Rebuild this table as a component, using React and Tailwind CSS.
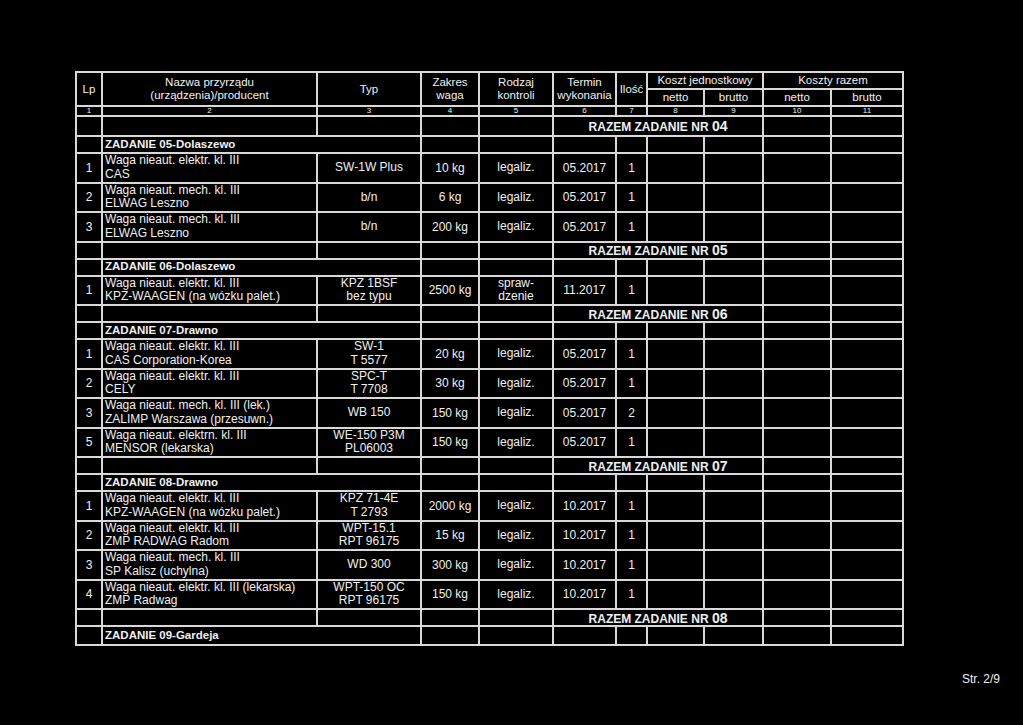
import React from "react";

const sections = [
  {
    razem: "04",
    title: "ZADANIE 05-Dolaszewo",
    rows: [
      ["1", ["Waga nieaut. elektr. kl. III", "CAS"], ["SW-1W Plus"], "10 kg", ["legaliz."], "05.2017", "1"],
      ["2", ["Waga nieaut. mech. kl. III", "ELWAG Leszno"], ["b/n"], "6 kg", ["legaliz."], "05.2017", "1"],
      ["3", ["Waga nieaut. mech. kl. III", "ELWAG Leszno"], ["b/n"], "200 kg", ["legaliz."], "05.2017", "1"],
    ],
  },
  {
    razem: "05",
    title: "ZADANIE 06-Dolaszewo",
    rows: [
      ["1", ["Waga nieaut. elektr. kl. III", "KPZ-WAAGEN (na wózku palet.)"], ["KPZ 1BSF", "bez typu"], "2500 kg", ["spraw-", "dzenie"], "11.2017", "1"],
    ],
  },
  {
    razem: "06",
    title: "ZADANIE 07-Drawno",
    rows: [
      ["1", ["Waga nieaut. elektr. kl. III", "CAS Corporation-Korea"], ["SW-1", "T 5577"], "20 kg", ["legaliz."], "05.2017", "1"],
      ["2", ["Waga nieaut. elektr. kl. III", "CELY"], ["SPC-T", "T 7708"], "30 kg", ["legaliz."], "05.2017", "1"],
      ["3", ["Waga nieaut. mech. kl. III (lek.)", "ZALIMP Warszawa (przesuwn.)"], ["WB 150"], "150 kg", ["legaliz."], "05.2017", "2"],
      ["5", ["Waga nieaut. elektrn. kl. III", "MENSOR (lekarska)"], ["WE-150 P3M", "PL06003"], "150 kg", ["legaliz."], "05.2017", "1"],
    ],
  },
  {
    razem: "07",
    title: "ZADANIE 08-Drawno",
    rows: [
      ["1", ["Waga nieaut. elektr. kl. III", "KPZ-WAAGEN (na wózku palet.)"], ["KPZ 71-4E", "T 2793"], "2000 kg", ["legaliz."], "10.2017", "1"],
      ["2", ["Waga nieaut. elektr. kl. III", "ZMP RADWAG Radom"], ["WPT-15.1", "RPT 96175"], "15 kg", ["legaliz."], "10.2017", "1"],
      ["3", ["Waga nieaut. mech. kl. III", "SP Kalisz (uchylna)"], ["WD 300"], "300 kg", ["legaliz."], "10.2017", "1"],
      ["4", ["Waga nieaut. elektr. kl. III (lekarska)", "ZMP Radwag"], ["WPT-150 OC", "RPT 96175"], "150 kg", ["legaliz."], "10.2017", "1"],
    ],
  },
  {
    razem: "08",
    title: "ZADANIE 09-Gardeja",
    rows: [],
  },
];

const cell = "border-2 border-[#d8d8d8] p-0";
const cols = [26, 215, 104, 58, 74, 63, 31, 57, 59, 68, 72];

function Lines({ items }) {
  return items.map((t, i) => (
    <div key={i} className="leading-[13.5px]">
      {t}
    </div>
  ));
}

function RazemRow({ nr, first }) {
  return (
    <tr className={first ? "h-[20px]" : "h-[17px]"}>
      <td className={cell} />
      <td className={cell} />
      <td className={cell} />
      <td className={cell} />
      <td className={cell} />
      <td colSpan={4} className={`${cell} text-center font-bold text-[12px] leading-none`}>
        RAZEM ZADANIE NR <span className="text-[14px]">{nr}</span>
      </td>
      <td className={cell} />
      <td className={cell} />
    </tr>
  );
}

function ZadanieRow({ title, last }) {
  return (
    <tr className={last ? "h-[19px]" : "h-[17px]"}>
      <td className={cell} />
      <td colSpan={2} className={`${cell} pl-[2px] font-bold text-[11.5px] leading-none`}>
        {title}
      </td>
      {Array.from({ length: 8 }).map((_, i) => (
        <td key={i} className={cell} />
      ))}
    </tr>
  );
}

function DataRow({ row }) {
  const [lp, nazwa, typ, zakres, rodzaj, termin, ilosc] = row;
  return (
    <tr className="h-[29.5px]">
      <td className={`${cell} text-center`}>{lp}</td>
      <td className={`${cell} pl-[2px] align-middle`}>
        <Lines items={nazwa} />
      </td>
      <td className={`${cell} text-center`}>
        <Lines items={typ} />
      </td>
      <td className={`${cell} text-center`}>{zakres}</td>
      <td className={`${cell} text-center`}>
        <Lines items={rodzaj} />
      </td>
      <td className={`${cell} text-center`}>{termin}</td>
      <td className={`${cell} text-center`}>{ilosc}</td>
      <td className={cell} />
      <td className={cell} />
      <td className={cell} />
      <td className={cell} />
    </tr>
  );
}

export default function App() {
  return (
    <div
      className="w-full h-[725px] bg-black text-[#f0f0f0] pt-[71px] pl-[75px] flex flex-col"
      style={{ fontFamily: '"Liberation Sans", Arial, sans-serif' }}
    >
      <table className="border-collapse table-fixed w-[829px] text-[12px]">
        <colgroup>
          {cols.map((w, i) => (
            <col key={i} style={{ width: w }} />
          ))}
        </colgroup>
        <thead className="text-[11.5px] leading-[13px] font-normal">
          <tr className="h-[17px]">
            <th rowSpan={2} className={`${cell} font-normal`}>Lp</th>
            <th rowSpan={2} className={`${cell} font-normal`}>
              Nazwa przyrządu
              <br />
              (urządzenia)/producent
            </th>
            <th rowSpan={2} className={`${cell} font-normal`}>Typ</th>
            <th rowSpan={2} className={`${cell} font-normal`}>
              Zakres
              <br />
              waga
            </th>
            <th rowSpan={2} className={`${cell} font-normal`}>
              Rodzaj
              <br />
              kontroli
            </th>
            <th rowSpan={2} className={`${cell} font-normal`}>
              Termin
              <br />
              wykonania
            </th>
            <th rowSpan={2} className={`${cell} font-normal`}>Ilość</th>
            <th colSpan={2} className={`${cell} font-normal`}>Koszt jednostkowy</th>
            <th colSpan={2} className={`${cell} font-normal`}>Koszty razem</th>
          </tr>
          <tr className="h-[17px]">
            <th className={`${cell} font-normal`}>netto</th>
            <th className={`${cell} font-normal`}>brutto</th>
            <th className={`${cell} font-normal`}>netto</th>
            <th className={`${cell} font-normal`}>brutto</th>
          </tr>
          <tr className="h-[10px]">
            {cols.map((_, i) => (
              <th key={i} className={`${cell} font-normal text-[8px] leading-[8px]`}>
                {i + 1}
              </th>
            ))}
          </tr>
        </thead>
        <tbody>
          {sections.map((s, si) => (
            <React.Fragment key={s.razem}>
              <RazemRow nr={s.razem} first={si === 0} />
              <ZadanieRow title={s.title} last={si === sections.length - 1} />
              {s.rows.map((r, ri) => (
                <DataRow key={ri} row={r} />
              ))}
            </React.Fragment>
          ))}
        </tbody>
      </table>
      <div className="flex justify-end pr-[23px] mt-[24px] text-[12px]">Str. 2/9</div>
    </div>
  );
}
